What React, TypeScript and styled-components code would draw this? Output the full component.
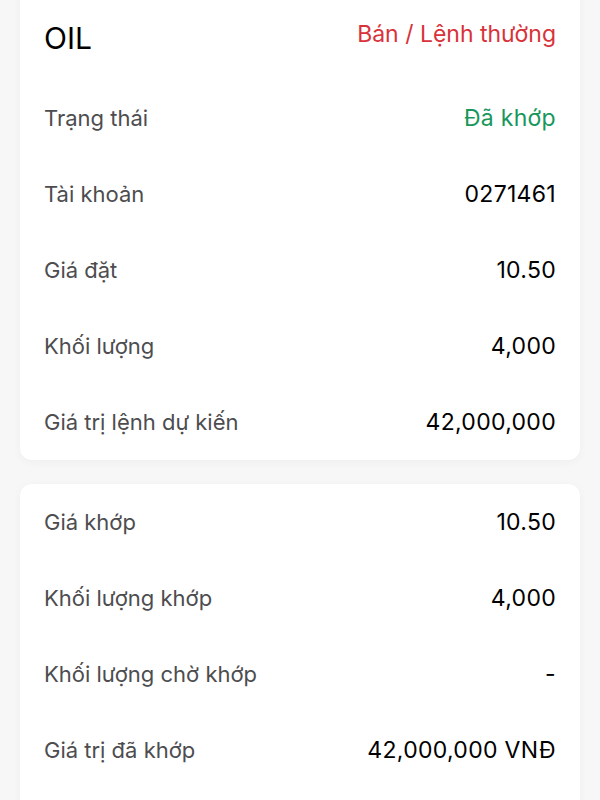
import React from 'react';
import styled, { createGlobalStyle } from 'styled-components';

const GlobalStyle = createGlobalStyle`
  html, body {
    margin: 0;
    padding: 0;
    background: #f7f7f8;
    font-family: Inter, 'Noto Sans', 'Liberation Sans', sans-serif;
    -webkit-font-smoothing: antialiased;
  }
`;

interface Row {
  label: string;
  value: string;
  tone?: 'green';
}

const orderRows: Row[] = [
  { label: 'Trạng thái', value: 'Đã khớp', tone: 'green' },
  { label: 'Tài khoản', value: '0271461' },
  { label: 'Giá đặt', value: '10.50' },
  { label: 'Khối lượng', value: '4,000' },
  { label: 'Giá trị lệnh dự kiến', value: '42,000,000' },
];

const matchRows: Row[] = [
  { label: 'Giá khớp', value: '10.50' },
  { label: 'Khối lượng khớp', value: '4,000' },
  { label: 'Khối lượng chờ khớp', value: '-' },
  { label: 'Giá trị đã khớp', value: '42,000,000 VNĐ' },
];

const App: React.FC = () => {
  return (
    <>
      <GlobalStyle />
      <Page>
        <Card first>
          <Header>
            <Symbol>OIL</Symbol>
            <Side>Bán / Lệnh thường</Side>
          </Header>
          {orderRows.map((r) => (
            <DetailRow key={r.label}>
              <Label>{r.label}</Label>
              <Value tone={r.tone}>{r.value}</Value>
            </DetailRow>
          ))}
        </Card>
        <Card>
          {matchRows.map((r) => (
            <DetailRow key={r.label}>
              <Label>{r.label}</Label>
              <Value tone={r.tone}>{r.value}</Value>
            </DetailRow>
          ))}
        </Card>
      </Page>
    </>
  );
};

const Page = styled.div`
  display: flex;
  flex-direction: column;
  gap: 24px;
  padding: 0 20px 40px;
  height: 800px;
  overflow: hidden;
  box-sizing: border-box;
`;

const Card = styled.div<{ first?: boolean }>`
  background: #ffffff;
  border-radius: 12px;
  box-shadow: 0 2px 10px rgba(0, 0, 0, 0.04);
  padding: 0 24px ${(p) => (p.first ? '0' : '30px')};
  margin-top: ${(p) => (p.first ? '-16px' : '0')};
  flex-shrink: 0;
`;

const Header = styled.div`
  display: flex;
  justify-content: space-between;
  align-items: center;
  height: 75px;
  padding: 16px 0 5px;
`;

const Symbol = styled.div`
  font-size: 30px;
  font-weight: 400;
  color: #000;
`;

const Side = styled.div`
  font-size: 23px;
  color: #d8323a;
  margin-bottom: 7px;
`;

const DetailRow = styled.div`
  display: flex;
  justify-content: space-between;
  align-items: center;
  height: 76px;
`;

const Label = styled.span`
  font-size: 22px;
  color: #4d4d4f;
`;

const Value = styled.span<{ tone?: 'green' }>`
  font-size: 23px;
  letter-spacing: 0.3px;
  color: ${(p) => (p.tone === 'green' ? '#17975c' : '#000')};
`;

export default App;
